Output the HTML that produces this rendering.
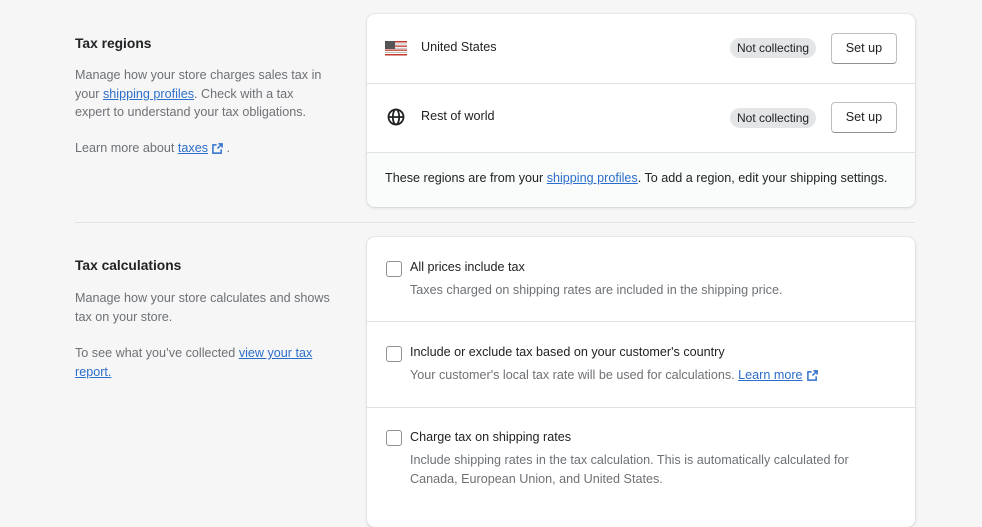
<!DOCTYPE html>
<html><head><style>
*{margin:0;padding:0;box-sizing:border-box}
body{width:982px;height:504px;background:#f6f6f7;font-family:"Liberation Sans",sans-serif;font-size:12.6px;color:#202223;position:relative;overflow:hidden}
.a{position:absolute;white-space:nowrap}
.t{font-weight:bold;font-size:13.8px}
.g{color:#6d7175;line-height:18.5px}
a{color:#2c6ecb;text-decoration:underline}
.card{position:absolute;left:367px;width:548px;background:#fff;border-radius:8px;box-shadow:0 0 0 1px rgba(63,63,68,.05),0 1px 3px rgba(63,63,68,.15);overflow:hidden}
.hr{position:absolute;left:0;right:0;height:1px;background:#e1e3e5}
.badge{position:absolute;left:363px;background:#e4e5e7;border-radius:10px;height:20px;line-height:20px;padding:0 7px;font-size:12px;color:#202223}
.btn{position:absolute;left:464px;width:66px;height:31px;border:1px solid #babfc3;border-bottom-color:#8c9196;border-radius:4px;text-align:center;line-height:29px;font-size:12.6px;background:#fff}
.cb{position:absolute;left:19px;width:16px;height:16px;border:1px solid #8c9196;border-radius:3px;background:#fff}
.ext{display:inline-block;vertical-align:-2px;margin-left:4px}
</style></head><body>
<div class="a t" style="left:75px;top:36px">Tax regions</div>
<div class="a g" style="left:75px;top:66px">Manage how your store charges sales tax in<br>your <a>shipping profiles</a>. Check with a tax<br>expert to understand your tax obligations.</div>
<div class="a g" style="left:75px;top:139px">Learn more about <a>taxes</a><svg class="ext" width="11" height="11" viewBox="0 0 12 12"><path d="M7 1h4v4M11 1L6 6M5 2H1v9h9V7" fill="none" stroke="#2c6ecb" stroke-width="1.6"/></svg> .</div>

<div class="card" style="top:14px;height:193px">
 <svg class="a" style="left:18px;top:27px" width="22" height="15" viewBox="0 0 22 15"><rect width="22" height="15" fill="#fff"/><g fill="#c0392b"><rect y="0" width="22" height="1.5"/><rect y="4.5" width="22" height="1.3"/><rect y="8.5" width="22" height="1.3"/><rect y="13" width="22" height="1.5"/></g><g fill="#bbb"><rect y="2.5" width="22" height="1"/><rect y="6.8" width="22" height="1"/><rect y="11" width="22" height="1"/></g><rect width="10" height="8" fill="#555"/></svg>
 <div class="a" style="left:54px;top:26px">United States</div>
 <div class="badge" style="top:24px">Not collecting</div>
 <div class="btn" style="top:19px">Set up</div>
 <div class="hr" style="top:69px"></div>
 <svg class="a" style="left:20px;top:94px" width="18" height="18" viewBox="0 0 18 18"><g fill="none" stroke="#202223" stroke-width="1.8"><circle cx="9" cy="9" r="7.5"/><ellipse cx="9" cy="9" rx="3.2" ry="7.5"/><path d="M1.5 9h15"/></g></svg>
 <div class="a" style="left:54px;top:95px">Rest of world</div>
 <div class="badge" style="top:94px">Not collecting</div>
 <div class="btn" style="top:88px">Set up</div>
 <div class="hr" style="top:138px"></div>
 <div style="position:absolute;left:0;right:0;top:139px;bottom:0;background:#fafbfb"></div>
 <div class="a" style="left:18px;top:157px">These regions are from your <a>shipping profiles</a>. To add a region, edit your shipping settings.</div>
</div>

<div style="position:absolute;left:75px;top:222px;width:840px;height:1px;background:#e1e3e5"></div>

<div class="a t" style="left:75px;top:258px">Tax calculations</div>
<div class="a g" style="left:75px;top:289px">Manage how your store calculates and shows<br>tax on your store.</div>
<div class="a g" style="left:75px;top:344px">To see what you’ve collected <a>view your tax</a><br><a>report.</a></div>

<div class="card" style="top:237px;height:290px">
 <div class="cb" style="top:24px"></div>
 <div class="a" style="left:43px;top:23px">All prices include tax</div>
 <div class="a g" style="left:43px;top:44px">Taxes charged on shipping rates are included in the shipping price.</div>
 <div class="hr" style="top:84px"></div>
 <div class="cb" style="top:109px"></div>
 <div class="a" style="left:43px;top:108px">Include or exclude tax based on your customer's country</div>
 <div class="a g" style="left:43px;top:129px">Your customer's local tax rate will be used for calculations. <a>Learn more</a><svg class="ext" width="11" height="11" viewBox="0 0 12 12"><path d="M7 1h4v4M11 1L6 6M5 2H1v9h9V7" fill="none" stroke="#2c6ecb" stroke-width="1.6"/></svg></div>
 <div class="hr" style="top:170px"></div>
 <div class="cb" style="top:193px"></div>
 <div class="a" style="left:43px;top:193px">Charge tax on shipping rates</div>
 <div class="a g" style="left:43px;top:214px">Include shipping rates in the tax calculation. This is automatically calculated for<br>Canada, European Union, and United States.</div>
</div>
</body></html>
